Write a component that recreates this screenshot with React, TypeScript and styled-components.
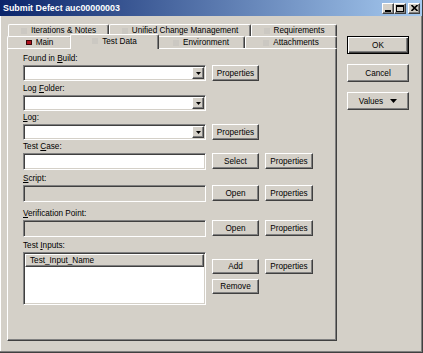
import React from "react";
import styled, { createGlobalStyle } from "styled-components";

const colors = {
  face: "#d4d0c8",
  light: "#ffffff",
  shadow: "#808080",
  dark: "#404040",
};

const GlobalStyle = createGlobalStyle`
  html, body {
    margin: 0;
    padding: 0;
    background: ${colors.face};
  }
  body {
    font-family: "Liberation Sans", Arial, sans-serif;
    font-size: 8.2px;
    color: #000;
  }
  * {
    box-sizing: border-box;
  }
`;

const raised = `
  background: ${colors.face};
  border: 1px solid;
  border-color: ${colors.light} ${colors.dark} ${colors.dark} ${colors.light};
  box-shadow: inset -1px -1px ${colors.shadow};
`;

const sunken = `
  border: 1px solid;
  border-color: ${colors.shadow} ${colors.light} ${colors.light} ${colors.shadow};
  box-shadow: inset 1px 1px ${colors.dark}, inset -1px -1px ${colors.face};
`;

const Window = styled.div`
  width: 423px;
  height: 353px;
  display: flex;
  flex-direction: column;
  background: ${colors.face};
  border-right: 1px solid ${colors.dark};
  border-bottom: 1px solid ${colors.dark};
  box-shadow: inset -1px -1px ${colors.shadow}, inset 1px 0 ${colors.light};
`;

const TitleBar = styled.div`
  height: 16px;
  display: flex;
  align-items: center;
  justify-content: space-between;
  padding: 0 2px 0 3px;
  background: linear-gradient(to right, #0a246a, #a6caf0);
`;

const TitleText = styled.span`
  color: #fff;
  font-weight: bold;
  font-size: 8.9px;
`;

const CaptionButtons = styled.div`
  display: flex;
  align-items: center;
`;

const CaptionButton = styled.div<{ $gap?: number }>`
  ${raised}
  width: 12px;
  height: 11px;
  margin-left: ${(p) => p.$gap ?? 0}px;
  display: flex;
  align-items: center;
  justify-content: center;
`;

const Body = styled.div`
  flex: 1;
  display: flex;
  padding: 8px 0 0 7px;
`;

const TabControl = styled.div`
  width: 330px;
  display: flex;
  flex-direction: column;
`;

const TabRow = styled.div<{ $indent?: number }>`
  display: flex;
  align-items: flex-start;
  height: 12px;
  padding-left: ${(p) => p.$indent ?? 0}px;
`;

const Tab = styled.div<{ $w: number; $selected?: boolean }>`
  width: ${(p) => (p.$selected ? p.$w + 4 : p.$w)}px;
  height: ${(p) => (p.$selected ? 15 : 12)}px;
  margin: ${(p) => (p.$selected ? "-2px -2px -1px" : "0")};
  position: ${(p) => (p.$selected ? "relative" : "static")};
  z-index: ${(p) => (p.$selected ? 1 : 0)};
  padding-bottom: ${(p) => (p.$selected ? 2 : 0)}px;
  display: flex;
  align-items: center;
  justify-content: center;
  gap: 4px;
  background: ${colors.face};
  border-top: 1px solid ${colors.light};
  border-left: 1px solid ${colors.light};
  border-right: 1px solid ${colors.dark};
  border-radius: 2px 2px 0 0;
  box-shadow: inset -1px 0 ${colors.shadow};
  white-space: nowrap;
`;

const TabIcon = styled.span<{ $active?: boolean }>`
  width: 6px;
  height: ${(p) => (p.$active ? 5 : 6)}px;
  background: ${(p) => (p.$active ? "#b0101c" : "#cbc8c2")};
  border: ${(p) => (p.$active ? "1px solid #3a0608" : "none")};
`;

const Panel = styled.div`
  width: 330px;
  height: 293px;
  border-top: 1px solid ${colors.light};
  border-left: 1px solid ${colors.light};
  border-right: 1px solid ${colors.dark};
  border-bottom: 1px solid ${colors.dark};
  box-shadow: inset -1px -1px ${colors.shadow};
  padding: 4px 0 0 15px;
  display: flex;
  flex-direction: column;
`;

const Group = styled.div<{ $mt: number }>`
  margin-top: ${(p) => p.$mt}px;
  display: flex;
  flex-direction: column;
`;

const Label = styled.div`
  height: 12px;
  line-height: 12px;
`;

const FieldRow = styled.div`
  display: grid;
  grid-template-columns: 183px 47px 48px;
  column-gap: 6px;
  align-items: start;
`;

const Combo = styled.div`
  ${sunken}
  height: 16px;
  background: #fff;
  display: flex;
  justify-content: flex-end;
  padding: 1px;
`;

const DropButton = styled.div`
  ${raised}
  width: 12px;
  height: 12px;
  display: flex;
  align-items: center;
  justify-content: center;
`;

const TextField = styled.div<{ $disabled?: boolean }>`
  ${sunken}
  height: 17px;
  background: ${(p) => (p.$disabled ? colors.face : "#fff")};
`;

const Button = styled.div<{ $h?: number }>`
  ${raised}
  height: ${(p) => p.$h ?? 16}px;
  display: flex;
  align-items: center;
  justify-content: center;
  white-space: nowrap;
`;

const ButtonStack = styled.div`
  margin-top: 7px;
  display: flex;
  flex-direction: column;
  gap: 5px;
`;

const ListBox = styled.div`
  ${sunken}
  height: 53px;
  background: #fff;
  padding: 1px;
`;

const ListHeader = styled.div`
  ${raised}
  height: 13px;
  line-height: 11px;
  padding-left: 4px;
`;

const ActionColumn = styled.div`
  margin: 12px 0 0 10px;
  display: flex;
  flex-direction: column;
  gap: 10px;
`;

const ActionButton = styled.div<{ $default?: boolean }>`
  width: 62px;
  height: 18px;
  display: flex;
  align-items: center;
  justify-content: center;
  gap: 7px;
  background: ${colors.face};
  ${(p) =>
    p.$default
      ? `border: 1px solid #000;
         box-shadow: inset 1px 1px ${colors.light}, inset -1px -1px ${colors.dark}, inset -2px -2px ${colors.shadow};`
      : `border: 1px solid;
         border-color: ${colors.light} ${colors.dark} ${colors.dark} ${colors.light};
         box-shadow: inset -1px -1px ${colors.shadow};`}
`;

const DownArrow = ({ w = 5, h = 3 }: { w?: number; h?: number }) => (
  <svg width={w} height={h} viewBox={`0 0 ${w} ${h}`}>
    <polygon points={`0,0 ${w},0 ${w / 2},${h}`} fill="#000" />
  </svg>
);

const ComboBox = () => (
  <Combo>
    <DropButton>
      <DownArrow />
    </DropButton>
  </Combo>
);

const App = () => {
  return (
    <Window>
      <GlobalStyle />
      <TitleBar>
        <TitleText>Submit Defect auc00000003</TitleText>
        <CaptionButtons>
          <CaptionButton>
            <svg width="6" height="7" viewBox="0 0 6 7">
              <rect x="0" y="5" width="6" height="2" fill="#000" />
            </svg>
          </CaptionButton>
          <CaptionButton>
            <svg width="8" height="7" viewBox="0 0 8 7">
              <rect x="0.5" y="0.5" width="7" height="6" fill="none" stroke="#000" />
              <rect x="0" y="0" width="8" height="2" fill="#000" />
            </svg>
          </CaptionButton>
          <CaptionButton $gap={2}>
            <svg width="7" height="6" viewBox="0 0 7 6">
              <path d="M0.5 0 L6.5 6 M6.5 0 L0.5 6" stroke="#000" strokeWidth="1.6" />
            </svg>
          </CaptionButton>
        </CaptionButtons>
      </TitleBar>
      <Body>
        <TabControl>
          <TabRow $indent={1}>
            <Tab $w={101}>
              <TabIcon />
              Iterations &amp; Notes
            </Tab>
            <Tab $w={142}>
              <TabIcon />
              Unified Change Management
            </Tab>
            <Tab $w={86}>
              <TabIcon />
              Requirements
            </Tab>
          </TabRow>
          <TabRow>
            <Tab $w={65}>
              <TabIcon $active />
              Main
            </Tab>
            <Tab $w={85} $selected>
              <TabIcon />
              Test Data
            </Tab>
            <Tab $w={88}>
              <TabIcon />
              Environment
            </Tab>
            <Tab $w={92}>
              <TabIcon />
              Attachments
            </Tab>
          </TabRow>
          <Panel>
            <Group $mt={0}>
              <Label>
                Found in <u>B</u>uild:
              </Label>
              <FieldRow>
                <ComboBox />
                <Button>Properties</Button>
              </FieldRow>
            </Group>
            <Group $mt={2}>
              <Label>
                Log <u>F</u>older:
              </Label>
              <FieldRow>
                <ComboBox />
              </FieldRow>
            </Group>
            <Group $mt={1}>
              <Label>
                <u>L</u>og:
              </Label>
              <FieldRow>
                <ComboBox />
                <Button>Properties</Button>
              </FieldRow>
            </Group>
            <Group $mt={1}>
              <Label>
                Test <u>C</u>ase:
              </Label>
              <FieldRow>
                <TextField />
                <Button>Select</Button>
                <Button>Properties</Button>
              </FieldRow>
            </Group>
            <Group $mt={3}>
              <Label>
                <u>S</u>cript:
              </Label>
              <FieldRow>
                <TextField $disabled />
                <Button>Open</Button>
                <Button>Properties</Button>
              </FieldRow>
            </Group>
            <Group $mt={6}>
              <Label>
                <u>V</u>erification Point:
              </Label>
              <FieldRow>
                <TextField $disabled />
                <Button>Open</Button>
                <Button>Properties</Button>
              </FieldRow>
            </Group>
            <Group $mt={3}>
              <Label>
                Test <u>I</u>nputs:
              </Label>
              <FieldRow>
                <ListBox>
                  <ListHeader>Test_Input_Name</ListHeader>
                </ListBox>
                <ButtonStack>
                  <Button $h={15}>Add</Button>
                  <Button $h={15}>Remove</Button>
                </ButtonStack>
                <ButtonStack>
                  <Button $h={15}>Properties</Button>
                </ButtonStack>
              </FieldRow>
            </Group>
          </Panel>
        </TabControl>
        <ActionColumn>
          <ActionButton $default>OK</ActionButton>
          <ActionButton>Cancel</ActionButton>
          <ActionButton>
            Values
            <DownArrow w={7} h={4} />
          </ActionButton>
        </ActionColumn>
      </Body>
    </Window>
  );
};

export default App;
